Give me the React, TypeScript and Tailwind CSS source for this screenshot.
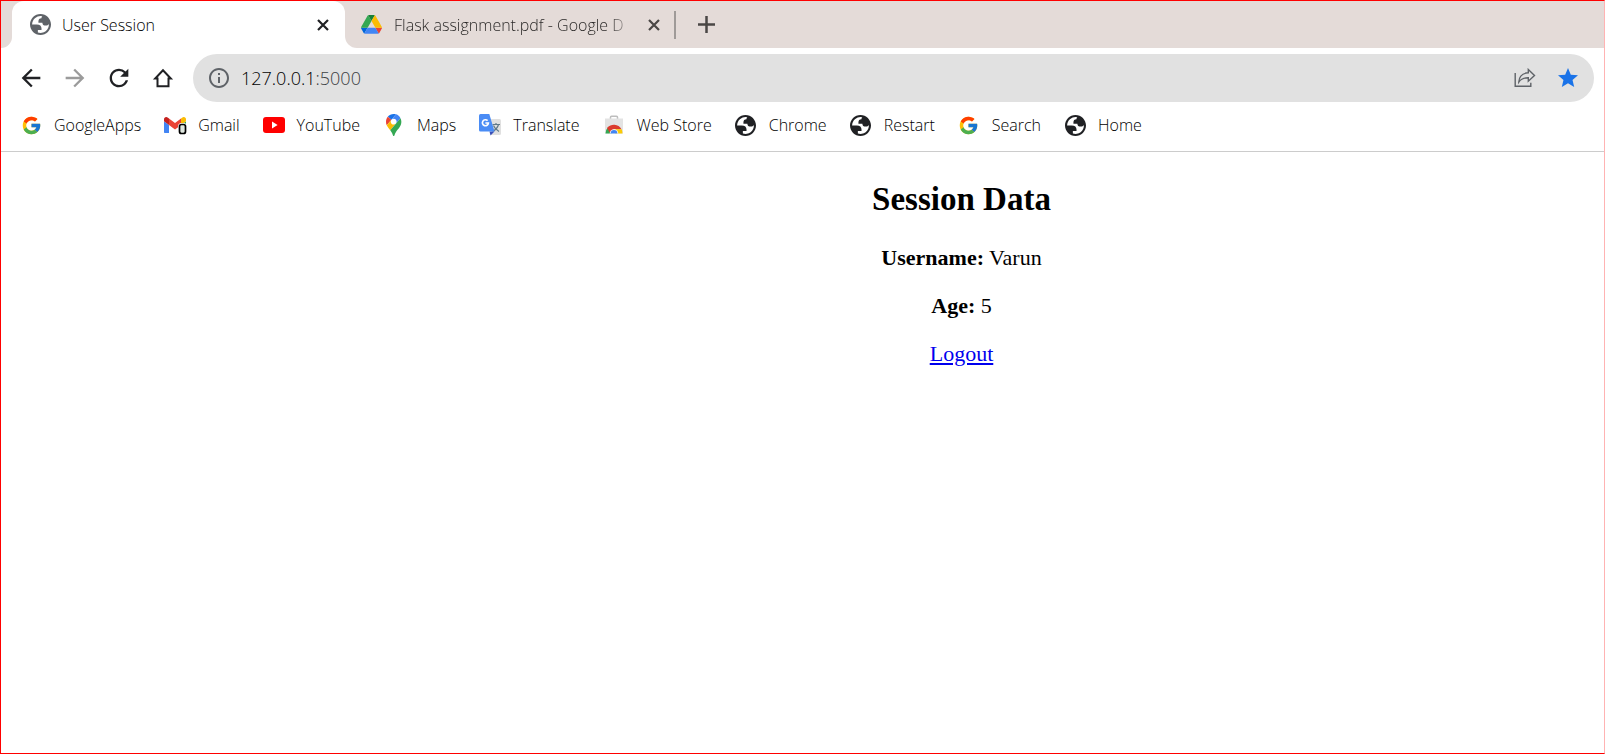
import React from "react";
import { FcGoogle } from "react-icons/fc";
import { MdArrowBack, MdArrowForward, MdInfoOutline, MdRefresh, MdStar } from "react-icons/md";

function Globe({ className }: { className: string }) {
  return (
    <svg viewBox="2 2 20 20" className={className} fill="currentColor" aria-hidden="true">
      <path
        fillRule="evenodd"
        d="M12 2C6.5 2 2 6.5 2 12s4.500 10 10 10 10-4.500 10-10S17.500 2 12 2zM4 12h4.400c3.407.022 4.922 1.730 4.543 5.127H9.488v2.470a8.004 8.004 0 0 0 10.498-8.080C19.327 12.506 18.332 13 17 13c-2.137 0-3.206-.916-3.206-2.750h-3.748c-.274-2.728.683-4.092 2.870-4.092 0-.975.327-1.597.811-1.970A8.004 8.004 0 0 0 4 12z"
      />
    </svg>
  );
}

function Drive() {
  return (
    <svg viewBox="0 0 87.3 78" className="w-[21px] shrink-0" aria-hidden="true">
      <path d="m6.6 66.85 3.85 6.65c.8 1.4 1.95 2.5 3.3 3.3l13.75-23.8h-27.5c0 1.55.4 3.1 1.2 4.5z" fill="#0066da" />
      <path d="m43.65 25-13.75-23.8c-1.35.8-2.5 1.9-3.3 3.3l-25.4 44a9.06 9.06 0 0 0-1.200 4.500h27.500z" fill="#34a853" />
      <path d="m73.55 76.8c1.35-.8 2.5-1.9 3.3-3.3l1.6-2.75 7.65-13.25c.8-1.4 1.2-2.95 1.2-4.5h-27.502l5.852 11.5z" fill="#ea4335" />
      <path d="m43.65 25 13.75-23.8c-1.35-.8-2.9-1.2-4.5-1.2h-18.5c-1.6 0-3.15.45-4.5 1.2z" fill="#188038" />
      <path d="m59.8 53h-32.3l-13.75 23.8c1.35.8 2.9 1.2 4.5 1.2h50.8c1.6 0 3.15-.45 4.5-1.2z" fill="#4285f4" />
      <path d="m73.4 26.5-12.7-22c-.8-1.4-1.95-2.5-3.3-3.3l-13.75 23.8 16.15 28h27.45c0-1.55-.4-3.1-1.2-4.5z" fill="#fbbc04" />
    </svg>
  );
}

function Gmail() {
  return (
    <span className="relative">
      <svg viewBox="52 42 88 66" className="w-[22px]" aria-hidden="true">
        <path fill="#4285f4" d="M58 108h14V74L52 59v43c0 3.320 2.690 6 6 6" />
        <path fill="#34a853" d="M120 108h14c3.320 0 6-2.690 6-6V59l-20 15" />
        <path fill="#fbbc04" d="M120 48v26l20-15v-8c0-7.420-8.470-11.650-14.400-7.200" />
        <path fill="#ea4335" d="M72 74V48l24 18 24-18v26L96 92" />
        <path fill="#c5221f" d="M52 51v8l20 15V48l-5.600-4.200c-5.940-4.450-14.400-.220-14.400 7.200" />
      </svg>
      <svg viewBox="0 0 9 12" className="absolute -right-px -bottom-[2px] h-3 w-[9px]" aria-hidden="true">
        <rect x="1.500" y="1.500" width="6" height="9" rx="2" fill="none" stroke="#fff" strokeWidth="3" />
        <rect x="1.500" y="1.500" width="6" height="9" rx="2" fill="#dfe7df" stroke="#000" strokeWidth="1.700" />
      </svg>
    </span>
  );
}

function YouTube() {
  return (
    <svg viewBox="0 0 22 16" className="w-[22px]" aria-hidden="true">
      <rect width="22" height="16" rx="3" fill="#f00" />
      <path d="M9 4.600v6.800L14.600 8z" fill="#fff" />
    </svg>
  );
}

function Maps() {
  return (
    <svg viewBox="0 0 92.3 132.3" className="h-[22px]" aria-hidden="true">
      <path fill="#1a73e8" d="M60.200 2.200C55.800.8 51 0 46.100 0 32 0 19.300 6.400 10.800 16.500l21.800 18.300L60.200 2.200z" />
      <path fill="#ea4335" d="M10.800 16.500C4.100 24.500 0 34.900 0 46.100c0 8.700 1.700 15.700 4.600 22l28-33.300-21.800-18.300z" />
      <path fill="#4285f4" d="M46.200 28.500c9.800 0 17.700 7.900 17.700 17.700 0 4.300-1.600 8.300-4.200 11.400 0 0 13.900-16.600 27.500-32.700-5.600-10.800-15.300-19-27-22.700L32.600 34.800c3.300-3.800 8.100-6.300 13.600-6.300" />
      <path fill="#fbbc04" d="M46.200 63.800c-9.800 0-17.700-7.900-17.700-17.700 0-4.300 1.500-8.300 4.100-11.300l-28 33.300c4.800 10.600 12.800 19.200 21 29.900l34.100-40.500c-3.300 3.900-8.100 6.300-13.500 6.300" />
      <path fill="#34a853" d="M59.100 109.200c15.400-24.100 33.300-35 33.300-63 0-7.700-1.900-14.900-5.200-21.300L25.600 98c2.600 3.400 5.300 7.300 7.900 11.300 9.400 14.500 6.800 23.100 12.800 23.100s3.400-8.700 12.800-23.200" />
    </svg>
  );
}

function Translate() {
  return (
    <svg viewBox="0 0 22 22" className="size-[22px]" aria-hidden="true">
      <path d="M9 5h11.500q1.500 0 1.500 1.500v13q0 1.500-1.500 1.500H12z" fill="#e0e0e0" />
      <path d="M13.500 10.500H21M17 9v1.500M19.500 10.500c-.8 3-3 5.500-6 7M14.500 11.500c1 2.500 3 4.600 5.500 6" fill="none" stroke="#607988" strokeWidth="1.200" />
      <path d="M10.500 17.500h5l-4 4z" fill="#3a50b8" />
      <path d="M1.500 0h8.800l5.200 17.500h-14Q0 17.500 0 16V1.500Q0 0 1.500 0z" fill="#4a8cf5" />
      <path d="M8.600 6.700A3 3 0 1 0 9.400 9H6.400" fill="none" stroke="#fff" strokeWidth="1.700" />
    </svg>
  );
}

function WebStore() {
  return (
    <svg viewBox="0 0 22 22" className="size-[22px]" aria-hidden="true">
      <path d="M7.500 5V3.200q0-1 1-1h5q1 0 1 1V5" fill="none" stroke="#bdbdbd" strokeWidth="1.500" />
      <path d="M2 4.500h18v15H2z" fill="#e3e3e3" />
      <path d="M2.500 19.500a8.500 8.500 0 0 1 3-6.500l3 6.500z" fill="#34a853" />
      <path d="M4 14a8.700 8.700 0 0 1 14.500 1.200H11L7 19z" fill="#db3b2e" />
      <path d="M11 15.200h7.600q1 2 .9 4.300H12z" fill="#fbcb05" />
      <path d="M6.700 19.500a4.300 4.300 0 0 1 8.600 0z" fill="#fff" />
      <path d="M7.600 19.500a3.400 3.400 0 0 1 6.800 0z" fill="#4285f4" />
    </svg>
  );
}

function Home() {
  return (
    <svg viewBox="0 0 28 28" className="size-7" fill="none" stroke="currentColor" strokeWidth="2" aria-hidden="true">
      <path d="M14 6.300 6.200 14.500h2.300v7.700h11v-7.700h2.300z" />
    </svg>
  );
}

function Share() {
  return (
    <svg viewBox="0 0 22 20" className="h-5 w-[22px]" fill="none" stroke="currentColor" strokeWidth="1.400" aria-hidden="true">
      <path d="M1.200 5v13.300h15.600V14.800" />
      <path d="M14.300 1.500 20.500 7.500l-6.200 5.700V9.800c-4.300-.1-7.300 1-9.500 4.200.3-5.300 3.500-8.700 9.500-9.200z" />
    </svg>
  );
}

function Close() {
  return (
    <svg viewBox="0 0 12 12" className="size-3" stroke="currentColor" strokeWidth="2.200" aria-hidden="true">
      <path d="M1 1l10 10M11 1 1 11" />
    </svg>
  );
}

const bookmarks = [
  { label: "GoogleApps", icon: <FcGoogle className="size-[21px]" /> },
  { label: "Gmail", icon: <Gmail /> },
  { label: "YouTube", icon: <YouTube /> },
  { label: "Maps", icon: <Maps /> },
  { label: "Translate", icon: <Translate /> },
  { label: "Web Store", icon: <WebStore /> },
  { label: "Chrome", icon: <Globe className="size-[21px]" /> },
  { label: "Restart", icon: <Globe className="size-[21px]" /> },
  { label: "Search", icon: <FcGoogle className="size-[21px]" /> },
  { label: "Home", icon: <Globe className="size-[21px]" /> },
];

function TabStrip() {
  return (
    <div className="flex h-[47px] bg-[#e4dbd8]">
      <div className="w-[11px] bg-white">
        <div className="h-full rounded-br-xl bg-[#e4dbd8]" />
      </div>
      <div className="flex w-[333px] items-center rounded-t-xl bg-white pr-4 pl-[18px] text-black">
        <Globe className="size-[21px] shrink-0 text-[#5f6368]" />
        <span className="ml-[11px] flex-1">User Session</span>
        <button aria-label="Close User Session" className="text-[#202124]">
          <Close />
        </button>
      </div>
      <div className="flex-1 bg-white">
        <div className="flex h-full items-center rounded-bl-xl bg-[#e4dbd8] pl-4 text-[#4a4745]">
          <Drive />
          <span className="ml-3 w-60 whitespace-nowrap text-[#2b2928] [mask-image:linear-gradient(to_right,black_215px,transparent_240px)]">
            Flask assignment.pdf - Google D
          </span>
          <button aria-label="Close Flask assignment.pdf" className="ml-3.5">
            <Close />
          </button>
          <span className="ml-3.5 h-7 w-0.5 bg-[#9f9a98]" />
          <button aria-label="New tab" className="ml-[22px]">
            <svg viewBox="0 0 17 17" className="size-[17px]" stroke="currentColor" strokeWidth="2.500" aria-hidden="true">
              <path d="M8.500 0v17M0 8.500h17" />
            </svg>
          </button>
        </div>
      </div>
    </div>
  );
}

function Toolbar() {
  return (
    <div className="flex items-center gap-4 pt-1.5 pr-2.5 pl-4 text-[#202124]">
      <div className="flex gap-4">
        <button aria-label="Back">
          <MdArrowBack className="size-7" />
        </button>
        <button aria-label="Forward" className="text-[#9b9b9b]">
          <MdArrowForward className="size-7" />
        </button>
        <button aria-label="Reload">
          <MdRefresh className="size-7" />
        </button>
        <button aria-label="Home">
          <Home />
        </button>
      </div>
      <div className="flex h-12 flex-1 items-center rounded-full bg-[#e1e1e1] px-3.5 text-[#5f6368]">
        <button aria-label="View site information">
          <MdInfoOutline className="size-6" />
        </button>
        <span className="ml-2.5 flex-1 text-lg text-[#3c4043]">
          <span className="text-black">127.0.0.1</span>:5000
        </span>
        <button aria-label="Share this page">
          <Share />
        </button>
        <button aria-label="Edit bookmark" className="ml-5 text-[#1a73e8]">
          <MdStar className="size-6" />
        </button>
      </div>
    </div>
  );
}

export default function App() {
  return (
    <div className="flex min-h-screen flex-col border border-[#f00] border-r-[#ffb3b3] bg-white">
      <header className="border-b border-[#cccccc] font-['Open_Sans',sans-serif] text-base font-light">
        <TabStrip />
        <Toolbar />
        <nav aria-label="Bookmarks" className="flex h-[49px] items-center gap-[23px] pb-[3px] pl-[19px] text-black">
          {bookmarks.map(({ label, icon }) => (
            <a key={label} href="#" className="flex items-center gap-3 whitespace-nowrap">
              <span className="flex w-[22px] justify-center text-[#202124]">{icon}</span>
              {label}
            </a>
          ))}
        </nav>
      </header>
      <main className="flex flex-col items-center gap-[22px] pt-7 pl-[318px] font-['Liberation_Serif',serif] text-[22px] leading-[26px] text-black">
        <h2 className="mb-[5px] text-[33px] leading-[38px] font-bold">Session Data</h2>
        <p>
          <b>Username:</b> Varun
        </p>
        <p>
          <b>Age:</b> 5
        </p>
        <a href="#" className="text-[#0000ee] underline">
          Logout
        </a>
      </main>
    </div>
  );
}
